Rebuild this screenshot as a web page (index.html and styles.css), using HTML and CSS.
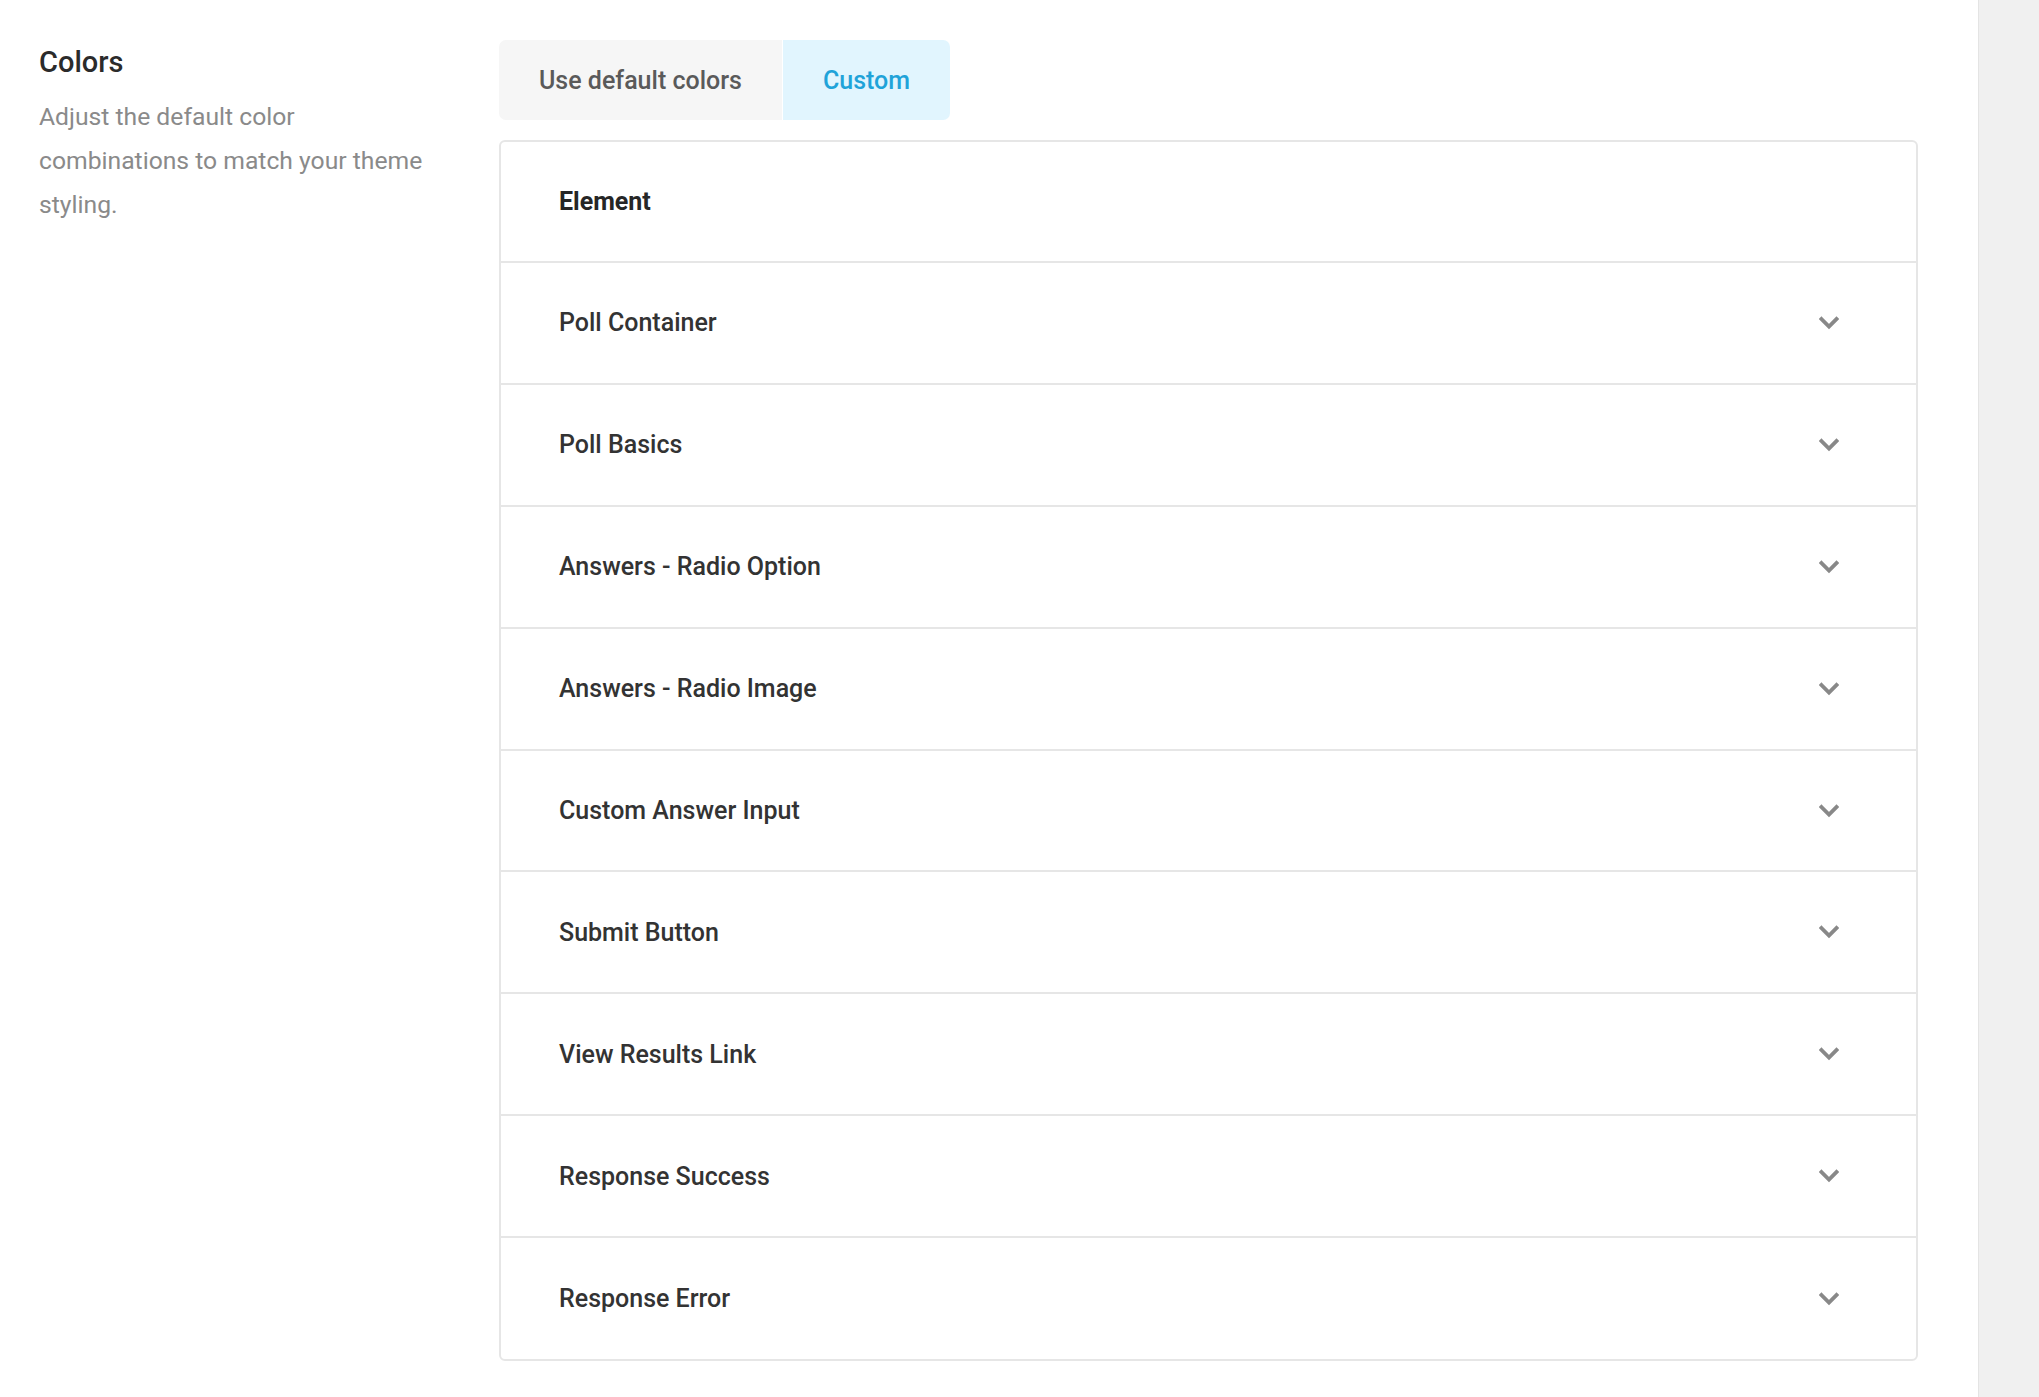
FILE: index.html
```html
<!DOCTYPE html>
<html lang="en">
<head>
<meta charset="utf-8">
<title>Colors</title>
<link rel="stylesheet" href="styles.css">
</head>
<body>
<div class="page">
  <main class="main">
    <section class="intro">
      <h2 class="title">Colors</h2>
      <p class="desc">Adjust the default color combinations to match your theme styling.</p>
    </section>
    <section class="content">
      <div class="tabs">
        <button class="tab">Use default colors</button>
        <button class="tab tab-active">Custom</button>
      </div>
      <div class="card">
        <div class="row row-head">Element</div>
        <div class="row"><span>Poll Container</span><svg class="chev" viewBox="0 0 20 14"><polyline points="2.5,3 10,10.5 17.5,3"/></svg></div>
        <div class="row"><span>Poll Basics</span><svg class="chev" viewBox="0 0 20 14"><polyline points="2.5,3 10,10.5 17.5,3"/></svg></div>
        <div class="row"><span>Answers - Radio Option</span><svg class="chev" viewBox="0 0 20 14"><polyline points="2.5,3 10,10.5 17.5,3"/></svg></div>
        <div class="row"><span>Answers - Radio Image</span><svg class="chev" viewBox="0 0 20 14"><polyline points="2.5,3 10,10.5 17.5,3"/></svg></div>
        <div class="row"><span>Custom Answer Input</span><svg class="chev" viewBox="0 0 20 14"><polyline points="2.5,3 10,10.5 17.5,3"/></svg></div>
        <div class="row"><span>Submit Button</span><svg class="chev" viewBox="0 0 20 14"><polyline points="2.5,3 10,10.5 17.5,3"/></svg></div>
        <div class="row"><span>View Results Link</span><svg class="chev" viewBox="0 0 20 14"><polyline points="2.5,3 10,10.5 17.5,3"/></svg></div>
        <div class="row"><span>Response Success</span><svg class="chev" viewBox="0 0 20 14"><polyline points="2.5,3 10,10.5 17.5,3"/></svg></div>
        <div class="row row-last"><span>Response Error</span><svg class="chev" viewBox="0 0 20 14"><polyline points="2.5,3 10,10.5 17.5,3"/></svg></div>
      </div>
    </section>
  </main>
  <aside class="side"></aside>
</div>
</body>
</html>
```

FILE: styles.css
```css
* { box-sizing: border-box; }
html, body { margin: 0; padding: 0; background: #fff; }
body {
  font-family: Roboto, "Liberation Sans", Arial, sans-serif;
  color: #333;
}
.page {
  display: flex;
  min-height: 100vh;
}
.main {
  flex: 1;
  display: flex;
  padding: 40px 60px 0 39px;
}
.intro {
  width: 460px;
  flex: none;
  padding-top: 5px;
  padding-right: 58px;
}
.title {
  margin: 0;
  font-size: 29px;
  line-height: 35px;
  font-weight: 500;
  color: #2b2b2b;
}
.desc {
  margin: 15px 0 0;
  font-size: 24.7px;
  line-height: 44px;
  color: #8a8a8a;
}
.content {
  flex: 1;
  display: flex;
  flex-direction: column;
  align-items: flex-start;
}
.tabs {
  display: flex;
  gap: 1px;
  height: 80px;
}
.tab {
  border: 0;
  margin: 0;
  padding: 0 40px;
  height: 80px;
  font-family: inherit;
  font-size: 25px;
  font-weight: 500;
  color: #5a5a5a;
  background: #f6f6f6;
  cursor: pointer;
}
.tab:first-child { border-radius: 7px 0 0 7px; }
.tab:last-child { border-radius: 0 7px 7px 0; }
.tab-active {
  background: #e1f5fe;
  color: #1fa3d9;
}
.card {
  margin-top: 20px;
  align-self: stretch;
  border: 2px solid #e6e6e6;
  border-radius: 6px;
  background: #fff;
}
.row {
  display: flex;
  align-items: center;
  justify-content: space-between;
  height: 121.9px;
  padding: 0 77px 0 58px;
  border-top: 2px solid #e6e6e6;
  font-size: 25px;
  font-weight: 500;
  color: #333;
}
.row-head {
  border-top: 0;
  height: 119px;
  font-weight: 700;
  color: #262626;
}
.row-last {
  height: 123px;
}
.chev {
  width: 20px;
  height: 14px;
  fill: none;
  stroke: #888;
  stroke-width: 3.8;
  stroke-linecap: square;
  stroke-linejoin: miter;
}
.side {
  width: 61px;
  flex: none;
  background: #f0f0f0;
  border-left: 1px solid #e4e4e4;
}
```
